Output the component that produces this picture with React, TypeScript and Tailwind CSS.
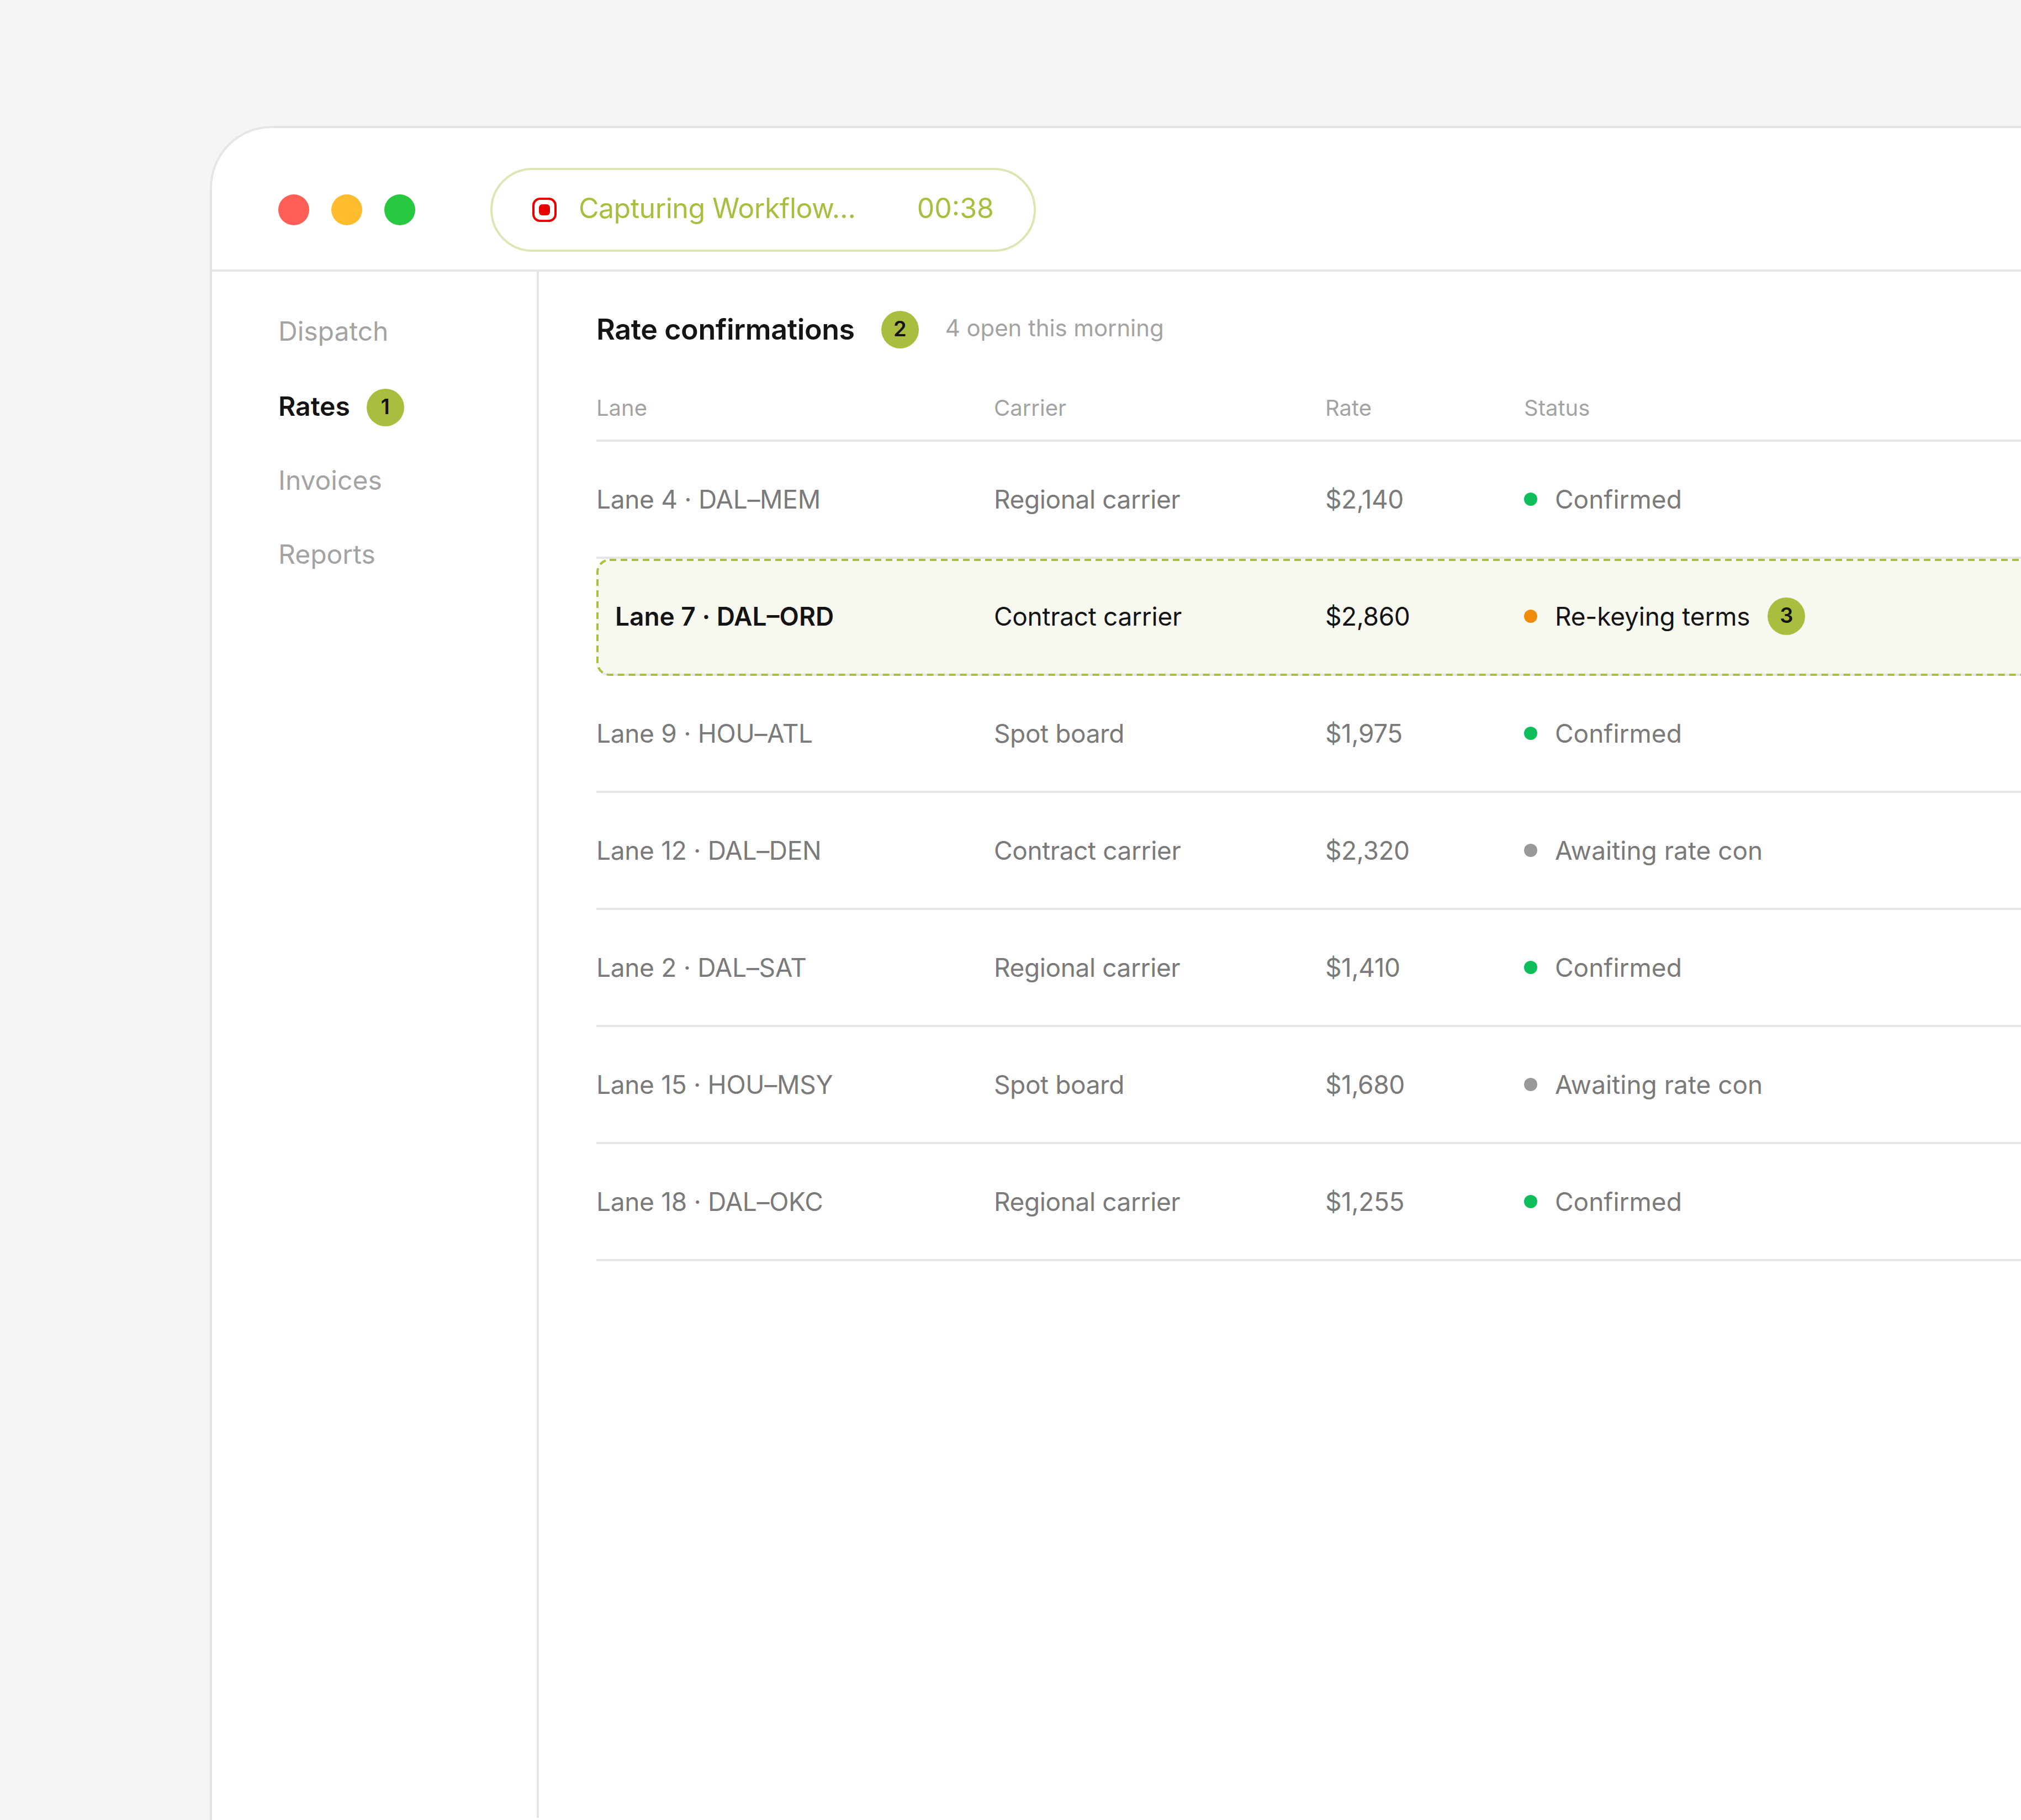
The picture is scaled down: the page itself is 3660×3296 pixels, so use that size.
const LINE = 'border-[#e5e5e5]';

type Row = { lane: string; carrier: string; rate: string; status: string; dot: string };

const rows: Row[] = [
  { lane: 'Lane 4 · DAL–MEM', carrier: 'Regional carrier', rate: '$2,140', status: 'Confirmed', dot: 'bg-[#0dbf5a]' },
  { lane: 'Lane 7 · DAL–ORD', carrier: 'Contract carrier', rate: '$2,860', status: 'Re-keying terms', dot: 'bg-[#f08c0c]' },
  { lane: 'Lane 9 · HOU–ATL', carrier: 'Spot board', rate: '$1,975', status: 'Confirmed', dot: 'bg-[#0dbf5a]' },
  { lane: 'Lane 12 · DAL–DEN', carrier: 'Contract carrier', rate: '$2,320', status: 'Awaiting rate con', dot: 'bg-[#999999]' },
  { lane: 'Lane 2 · DAL–SAT', carrier: 'Regional carrier', rate: '$1,410', status: 'Confirmed', dot: 'bg-[#0dbf5a]' },
  { lane: 'Lane 15 · HOU–MSY', carrier: 'Spot board', rate: '$1,680', status: 'Awaiting rate con', dot: 'bg-[#999999]' },
  { lane: 'Lane 18 · DAL–OKC', carrier: 'Regional carrier', rate: '$1,255', status: 'Confirmed', dot: 'bg-[#0dbf5a]' },
];

function Badge({ n }: { n: number }) {
  return (
    <span className="flex h-[68px] w-[68px] shrink-0 items-center justify-center rounded-full bg-[#a9bd3e] pb-[4px] text-[38px] font-semibold leading-none text-[#141414]">
      {n}
    </span>
  );
}

function TableRow({ row, active }: { row: Row; active: boolean }) {
  if (active) {
    return (
      <div className={`relative flex h-[212px] items-center rounded-[24px] border-b-4 ${LINE} bg-[#f7f8f0] text-[#141414]`}>
        <svg className="absolute left-0 top-0 overflow-visible" width="2705" height="212" fill="none">
          <rect x="2" y="2" width="2701" height="208" rx="22" stroke="#abc03f" strokeWidth="4" strokeDasharray="12 8" />
        </svg>
        <div className="w-[720px] pl-[34px] font-semibold">{row.lane}</div>
        <div className="w-[600px] tracking-[-0.3px]">{row.carrier}</div>
        <div className="w-[360px] tracking-[-0.4px]">{row.rate}</div>
        <div className="flex items-center">
          <span className={`mr-[32px] h-[24px] w-[24px] rounded-full ${row.dot}`} />
          <span className="tracking-[-0.2px]">{row.status}</span>
          <span className="ml-[32px]"><Badge n={3} /></span>
        </div>
      </div>
    );
  }
  return (
    <div className={`flex h-[212px] items-center border-b-4 ${LINE} text-[#7a7a7a]`}>
      <div className="w-[720px] tracking-[-0.3px]">{row.lane}</div>
      <div className="w-[600px] tracking-[-0.4px]">{row.carrier}</div>
      <div className="w-[360px] tracking-[-0.4px]">{row.rate}</div>
      <div className="flex items-center">
        <span className={`mr-[32px] h-[24px] w-[24px] rounded-full ${row.dot}`} />
        <span>{row.status}</span>
      </div>
    </div>
  );
}

export default function App() {
  return (
    <div className="h-[3296px] w-[3660px] overflow-hidden bg-[#f5f5f5] pl-[380px] pt-[228px] font-['Inter',sans-serif]">
      <div className={`h-[3200px] w-[3400px] rounded-tl-[112px] border-l-4 border-t-4 ${LINE} bg-white`}>
        <header className={`flex items-start border-b-4 ${LINE} pb-[32px] pl-[120px] pt-[72px]`}>
          <div className="flex h-[152px] items-center gap-[40px]">
            <span className="h-[56px] w-[56px] rounded-full bg-[#ff5f57]" />
            <span className="h-[56px] w-[56px] rounded-full bg-[#febc2e]" />
            <span className="h-[56px] w-[56px] rounded-full bg-[#28c840]" />
          </div>
          <div className="ml-[136px] flex h-[152px] w-[988px] items-center rounded-full border-4 border-[#dde5b2] pl-[72px] text-[50px] text-[#a9bd3e]">
            <span className="flex h-[44px] w-[44px] items-center justify-center rounded-[14px] border-4 border-[#e60000]">
              <span className="h-[20px] w-[20px] rounded-[6px] bg-[#e60000]" />
            </span>
            <span className="ml-[40px] pb-[6px] tracking-[-0.5px]">Capturing Workflow…</span>
            <span className="ml-auto pb-[6px] pr-[72px]">00:38</span>
          </div>
        </header>
        <div className="flex h-[2800px]">
          <aside className={`w-[592px] shrink-0 border-r-4 ${LINE} pl-[120px] pt-[72px] text-[48px] text-[#a3a3a3]`}>
            <div className="flex h-[136px] items-start">Dispatch</div>
            <div className="flex h-[134px] items-start gap-[30px] font-semibold text-[#141414]">
              Rates <span className="mt-[4px]"><Badge n={1} /></span>
            </div>
            <div className="flex h-[134px] items-start">Invoices</div>
            <div className="flex h-[134px] items-start">Reports</div>
          </aside>
          <main className="w-[2800px] shrink-0 pl-[104px] text-[46px]">
            <div className="flex h-[210px] items-center">
              <span className="text-[52px] font-semibold tracking-[-0.4px] text-[#141414]">Rate confirmations</span>
              <span className="ml-[48px]"><Badge n={2} /></span>
              <span className="ml-[48px] pb-[8px] text-[42px] tracking-[-0.1px] text-[#a3a3a3]">4 open this morning</span>
            </div>
            <div className={`flex h-[98px] items-start border-b-4 ${LINE} pt-[2px] text-[40px] leading-[70px] text-[#a3a3a3]`}>
              <div className="w-[720px]">Lane</div>
              <div className="w-[600px]">Carrier</div>
              <div className="w-[360px]">Rate</div>
              <div>Status</div>
            </div>
            {rows.map((row, i) => (
              <TableRow key={row.lane} row={row} active={i === 1} />
            ))}
          </main>
        </div>
      </div>
    </div>
  );
}
